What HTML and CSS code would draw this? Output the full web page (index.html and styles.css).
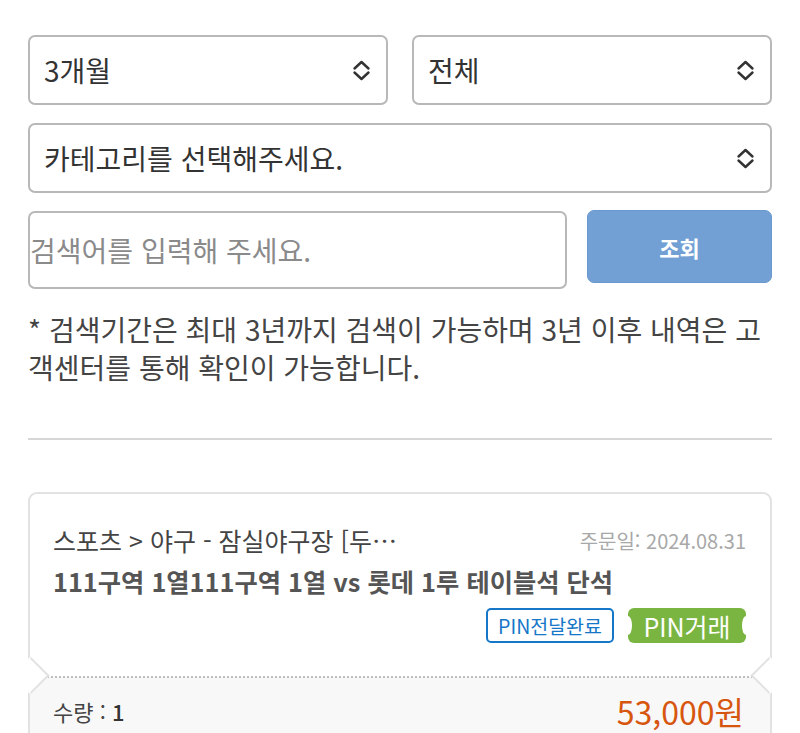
FILE: index.html
```html
<!DOCTYPE html>
<html lang="ko">
<head>
<meta charset="utf-8">
<link rel="stylesheet" href="styles.css">
</head>
<body>
<div class="page">
  <div class="filters">
    <div class="select">
      <span>3개월</span>
      <svg class="chev" width="19" height="21" viewBox="0 0 19 21"><path d="M2.5 8.5 L9.5 2 L16.5 8.5 M2.5 12.5 L9.5 19 L16.5 12.5" fill="none" stroke="#333" stroke-width="2.4" stroke-linecap="round" stroke-linejoin="round"/></svg>
    </div>
    <div class="select">
      <span>전체</span>
      <svg class="chev" width="19" height="21" viewBox="0 0 19 21"><path d="M2.5 8.5 L9.5 2 L16.5 8.5 M2.5 12.5 L9.5 19 L16.5 12.5" fill="none" stroke="#333" stroke-width="2.4" stroke-linecap="round" stroke-linejoin="round"/></svg>
    </div>
    <div class="select wide">
      <span>카테고리를 선택해주세요.</span>
      <svg class="chev" width="19" height="21" viewBox="0 0 19 21"><path d="M2.5 8.5 L9.5 2 L16.5 8.5 M2.5 12.5 L9.5 19 L16.5 12.5" fill="none" stroke="#333" stroke-width="2.4" stroke-linecap="round" stroke-linejoin="round"/></svg>
    </div>
  </div>
  <div class="search-row">
    <input class="search-input" type="text" placeholder="검색어를 입력해 주세요.">
    <button class="search-btn">조회</button>
  </div>
  <p class="notice">* 검색기간은 최대 3년까지 검색이 가능하며 3년 이후 내역은 고객센터를 통해 확인이 가능합니다.</p>
  <hr class="divider">
  <div class="card">
    <div class="card-top">
      <div class="meta">
        <span class="cat">스포츠 &gt; 야구 - 잠실야구장 [두…</span>
        <span class="date">주문일: 2024.08.31</span>
      </div>
      <div class="title">111구역 1열111구역 1열 vs 롯데 1루 테이블석 단석</div>
      <div class="badges">
        <span class="badge-outline">PIN전달완료</span>
        <span class="badge-ticket">PIN거래</span>
      </div>
    </div>
    <div class="card-bottom">
      <span class="qty">수량 : <b>1</b></span>
      <span class="price">53,000원</span>
    </div>
  </div>
</div>
</body>
</html>
```
FILE: styles.css
```css
* { box-sizing: border-box; }
html, body { margin: 0; padding: 0; background: #fff; }
body {
  font-family: "Noto Sans CJK KR", "Noto Sans", sans-serif;
  color: #333;
}
.page { padding: 35px 28px 0; }
.filters {
  display: grid;
  grid-template-columns: 1fr 1fr;
  column-gap: 24px;
  row-gap: 18px;
}
.select {
  height: 70px;
  border: 2px solid #b8b8b8;
  border-radius: 7px;
  display: flex;
  align-items: center;
  justify-content: space-between;
  padding: 0 15px 0 14px;
  font-size: 28px;
  color: #333;
}
.select.wide { grid-column: 1 / 3; }
.chev { display: block; }
.search-row {
  display: flex;
  gap: 20px;
  margin-top: 18px;
  align-items: flex-start;
}
.search-input {
  width: 539px;
  height: 78px;
  border: 2px solid #b8b8b8;
  border-radius: 7px;
  padding: 0;
  font-family: inherit;
  font-size: 28px;
  color: #333;
  outline: none;
}
.search-input::placeholder { color: #8a8a8a; }
.search-btn {
  flex: 1;
  height: 73px;
  margin-top: -1px;
  border: 1px solid #6a99cf;
  border-radius: 7px;
  background: #72a0d5;
  color: #fff;
  font-family: inherit;
  font-size: 22px;
  font-weight: 700;
}
.notice {
  margin: 21px 0 0;
  font-size: 28px;
  line-height: 38px;
  color: #444;
}
.divider {
  margin: 52px 0 0;
  border: 0;
  border-top: 2px solid #d6d6d6;
}
.card {
  position: relative;
  margin-top: 52px;
  border: 2px solid #e2e2e2;
  border-radius: 9px;
}
.card-top {
  position: relative;
  padding: 30px 24px 34px 23px;
}
.card-top::before,
.card-top::after {
  content: "";
  position: absolute;
  bottom: -12px;
  width: 23px;
  height: 23px;
  background: #fff;
  border: 2px solid #e2e2e2;
  z-index: 2;
}
.card-top::before {
  left: -13px;
  border-left-color: transparent;
  border-bottom-color: transparent;
  transform: rotate(45deg);
}
.card-top::after {
  right: -13px;
  border-right-color: transparent;
  border-top-color: transparent;
  transform: rotate(45deg);
}
.meta {
  display: flex;
  justify-content: space-between;
  align-items: center;
  height: 32px;
}
.cat { font-size: 25px; color: #444; }
.date { font-size: 20px; color: #a8a8a8; }
.title {
  margin-top: 6px;
  font-size: 25.3px;
  line-height: 38px;
  font-weight: 700;
  color: #555;
}
.badges {
  display: flex;
  justify-content: flex-end;
  gap: 14px;
  margin-top: 8px;
}
.badge-outline {
  height: 35px;
  padding: 0 10px;
  display: flex;
  align-items: center;
  border: 2px solid #1677c8;
  border-radius: 5px;
  color: #1677c8;
  font-size: 19.5px;
}
.badge-ticket {
  position: relative;
  height: 35px;
  width: 118px;
  display: flex;
  align-items: center;
  justify-content: center;
  background: #7bb541;
  border-radius: 6px;
  color: #fff;
  font-size: 25px;
}
.badge-ticket::before,
.badge-ticket::after {
  content: "";
  position: absolute;
  top: 8px;
  width: 8px;
  height: 19px;
  border-radius: 50%;
  background: #fff;
}
.badge-ticket::before { left: -4px; }
.badge-ticket::after { right: -4px; }
.card-bottom {
  position: relative;
  background: #f8f8f8;
  border-radius: 0 0 9px 9px;
  padding: 11px 26px 40px 23px;
  display: flex;
  justify-content: space-between;
  align-items: center;
}
.card-bottom::before {
  content: "";
  position: absolute;
  top: -1px;
  left: 14px;
  right: 14px;
  border-top: 2px dotted #bdbdbd;
}
.qty { font-size: 22px; color: #444; }
.qty b { font-weight: 500; color: #333; }
.price { font-size: 32px; color: #d7560f; }
```
